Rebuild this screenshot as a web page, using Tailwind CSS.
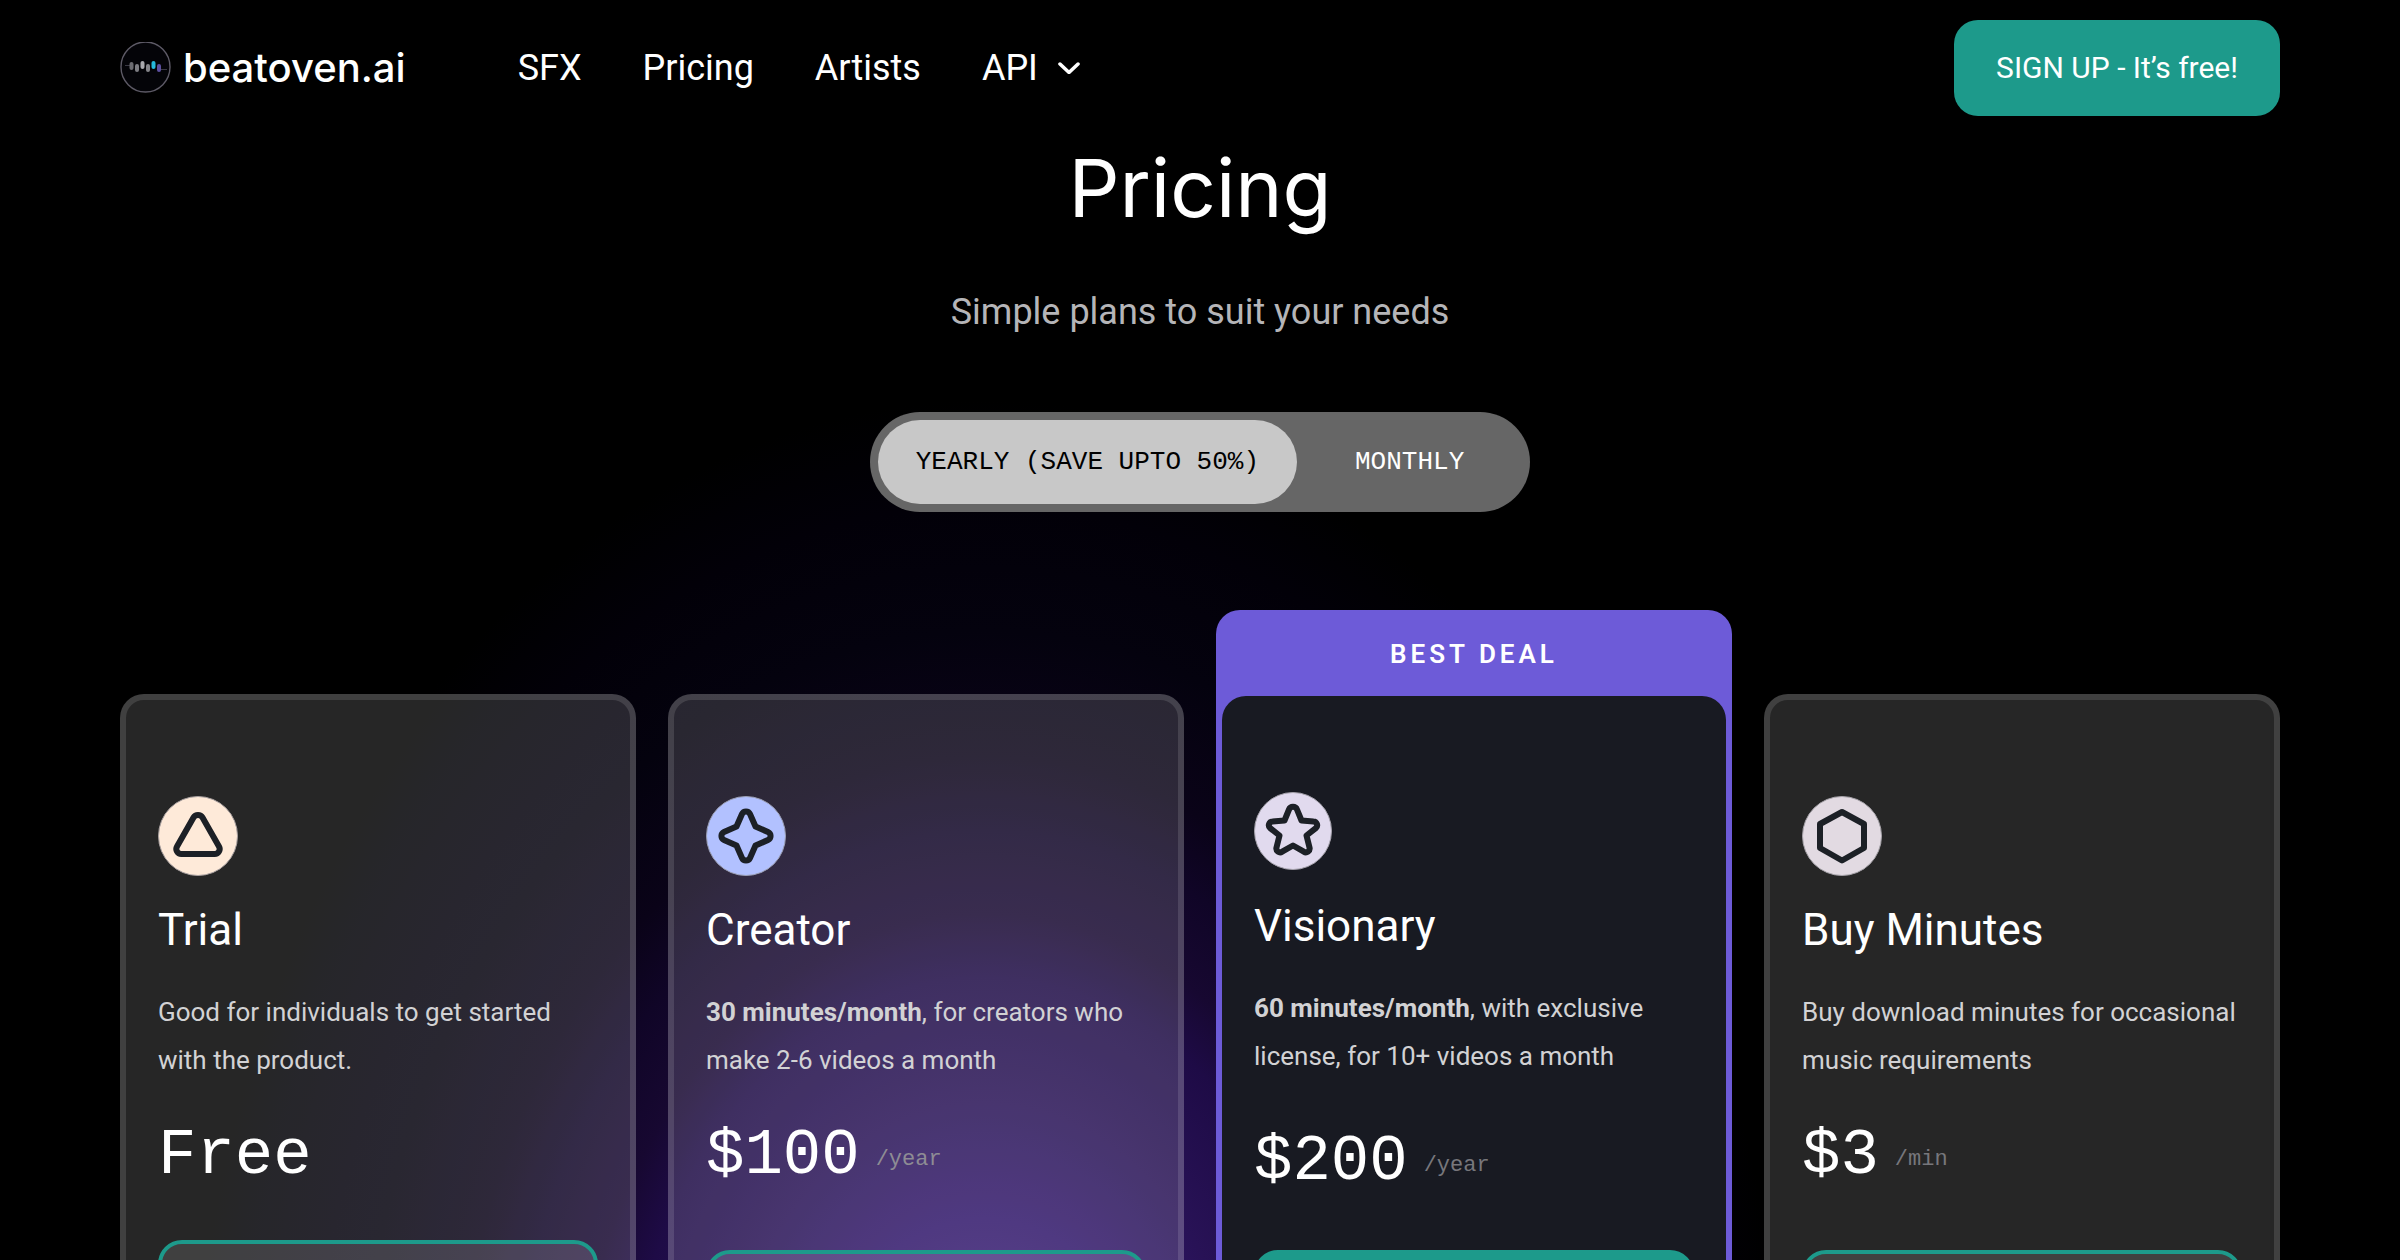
<!DOCTYPE html>
<html lang="en">
  <head>
    <meta charset="UTF-8" />
    <meta name="viewport" content="width=device-width, initial-scale=1.0" />
    <title>Pricing - beatoven.ai</title>
    <script src="https://cdn.jsdelivr.net/npm/@tailwindcss/browser@4"></script>
  </head>
  <body
    class="h-screen overflow-hidden bg-black bg-[radial-gradient(800px_1050px_at_41%_1450px,#432688_0%,#31176b_22%,#281256_33%,#1e0b46_45%,#170831_51%,#100527_59%,#0a0318_66%,#04020e_78%,#020008_90%,#000000_100%)] px-[5%] font-['Roboto',sans-serif] text-white"
  >
    <!-- Navigation Bar -->
    <header class="flex items-center justify-between py-5">
      <div class="flex items-center gap-28">
        <a href="/" class="flex items-center gap-3">
          <svg class="h-[52px] w-[51px]" viewBox="0 0 51 52" fill="none">
            <ellipse cx="25.5" cy="25" rx="24.5" ry="25" fill="#040408" stroke="#5d5a66" stroke-width="1.4" />
            <path d="M5 23.500h6M41 27.500h6" stroke="#3a3944" />
            <g stroke-width="4" stroke-linecap="round">
              <path d="M11.500 22v4" stroke="#6b6b70" />
              <path d="M17 24v4" stroke="#7d7d82" />
              <path d="M22.500 21v4" stroke="#a9a9ad" />
              <path d="M28 24v4" stroke="#85858a" />
              <path d="M33.500 21v4" stroke="#25b9dc" />
              <path d="M39 24v4" stroke="#5d50a0" />
            </g>
          </svg>
          <span class="font-['Inter',sans-serif] text-[40px] leading-[48px] font-medium">beatoven.ai</span>
        </a>
        <nav class="flex items-center gap-[61px] text-4xl">
          <a href="/sfx">SFX</a>
          <a href="/pricing">Pricing</a>
          <a href="/artists">Artists</a>
          <button type="button" class="flex items-center gap-5">
            API
            <svg class="h-3 w-[22px]" viewBox="0 0 22 12" fill="none" stroke="currentColor" stroke-width="3.5" stroke-linecap="round" stroke-linejoin="round">
              <path d="M2 2l9 8.500 9-8.500" />
            </svg>
          </button>
        </nav>
      </div>
      <a href="/signup" class="rounded-3xl bg-[#1d9a8b] px-[42px] py-7 text-3xl leading-10">SIGN UP - It’s free!</a>
    </header>

    <main>
      <!-- Heading -->
      <div class="flex flex-col items-center pt-3">
        <h1 class="font-['Inter',sans-serif] text-[80px] leading-20">Pricing</h1>
        <p class="mt-16 text-4xl text-[#b5b5b8]">Simple plans to suit your needs</p>

        <!-- Billing period -->
        <div class="mt-20 flex rounded-[50px] bg-[#666666] p-2 font-['Liberation_Mono',monospace] text-[26px] leading-9">
          <button type="button" aria-pressed="true" class="rounded-[42px] bg-[#c8c8c8] px-[38px] py-6 text-black">YEARLY (SAVE UPTO 50%)</button>
          <button type="button" aria-pressed="false" class="px-[58px] py-6">MONTHLY</button>
        </div>
      </div>

      <!-- Plans -->
      <div class="mt-[98px] grid grid-cols-4 gap-8">
        <section class="mt-21 rounded-3xl border-6 border-white/12 bg-white/15 px-8 pt-24 pb-20">
          <svg class="size-20" viewBox="0 0 80 80" fill="none">
            <circle cx="40" cy="40" r="39.500" fill="#feead9" stroke="#a8a0a0" />
            <path d="M35.500 21.500a5.200 5.200 0 0 1 9 0L61 50.500a5 5 0 0 1-4.400 7.500H23.400a5 5 0 0 1-4.400-7.500z" stroke="#1c2026" stroke-width="6" stroke-linejoin="round" />
          </svg>
          <h2 class="mt-[26px] text-[44px] leading-14">Trial</h2>
          <p class="mt-[30px] text-[26px] leading-12 text-[#d2d2d4]">Good for individuals to get started with the product.</p>
          <div class="mt-10 flex items-center gap-4 font-['Liberation_Mono',monospace]">
            <span class="text-[64px] leading-16">Free</span>
          </div>
          <button type="button" aria-label="Get started with Trial" class="mt-[52px] h-24 w-full rounded-3xl border-4 border-[#1d9a8b] bg-white/12"></button>
        </section>

        <section class="mt-21 rounded-3xl border-6 border-white/12 bg-white/15 px-8 pt-24 pb-20">
          <svg class="size-20" viewBox="0 0 80 80" fill="none">
            <circle cx="40" cy="40" r="39.500" fill="#b2c1ff" stroke="#9b9fb4" />
            <path d="M30.500 30.500L36 18a4.400 4.400 0 0 1 8 0l5.500 12.500L62 36a4.400 4.400 0 0 1 0 8l-12.500 5.500L44 62a4.400 4.400 0 0 1-8 0l-5.500-12.500L18 44a4.400 4.400 0 0 1 0-8z" stroke="#1c2026" stroke-width="6" stroke-linejoin="round" />
          </svg>
          <h2 class="mt-[26px] text-[44px] leading-14">Creator</h2>
          <p class="mt-[30px] text-[26px] leading-12 text-[#d2d2d4]"><strong>30 minutes/month</strong>, for creators who make 2-6 videos a month</p>
          <div class="mt-10 flex items-center gap-4 font-['Liberation_Mono',monospace]">
            <span class="text-[64px] leading-16">$100</span>
            <span class="pt-2 text-[22px] leading-6 text-[#8e8c94]">/year</span>
          </div>
          <button type="button" aria-label="Buy Creator" class="mt-[62px] h-24 w-full rounded-3xl border-4 border-[#1d9a8b] bg-white/12"></button>
        </section>

        <section class="rounded-t-3xl bg-[#6d5bd8] px-[6px]">
          <p class="pt-6 pb-[22px] text-center text-[26px] leading-10 font-semibold tracking-[4px]">BEST DEAL</p>
          <div class="rounded-t-3xl bg-[#181a22] px-8 pt-24 pb-20">
            <svg class="size-[78px]" viewBox="0 0 78 78" fill="none">
              <circle cx="39" cy="39" r="38.500" fill="#e1daee" stroke="#a5a2ac" />
              <path d="M30.500 28.500L35 17.500a4.300 4.300 0 0 1 8 0l4.500 11 12 1a3.800 3.800 0 0 1 2.300 6.700l-9.300 7.300 3 12a3.800 3.800 0 0 1-5.700 4.200L39 53.500l-10.800 6.200a3.800 3.800 0 0 1-5.700-4.200l3-12-9.300-7.300a3.800 3.800 0 0 1 2.300-6.700z" stroke="#1c2026" stroke-width="6" stroke-linejoin="round" />
            </svg>
            <h2 class="mt-7 text-[44px] leading-14">Visionary</h2>
            <p class="mt-[30px] text-[26px] leading-12 text-[#d2d2d4]"><strong>60 minutes/month</strong>, with exclusive license, for 10+ videos a month</p>
            <div class="mt-[50px] flex items-center gap-4 font-['Liberation_Mono',monospace]">
              <span class="text-[64px] leading-16">$200</span>
              <span class="pt-2 text-[22px] leading-6 text-[#77777c]">/year</span>
            </div>
            <button type="button" aria-label="Buy Visionary" class="mt-14 h-24 w-full rounded-3xl bg-[#1d9a8b]"></button>
          </div>
        </section>

        <section class="mt-21 rounded-3xl border-6 border-white/12 bg-white/15 px-8 pt-24 pb-20">
          <svg class="size-20" viewBox="0 0 80 80" fill="none">
            <circle cx="40" cy="40" r="39.500" fill="#e2dae2" stroke="#a5a2a8" />
            <path d="M18 28l22-12 22 12v24L40 64.500 18 52z" stroke="#1c2026" stroke-width="6" stroke-linejoin="round" />
          </svg>
          <h2 class="mt-[26px] text-[44px] leading-14">Buy Minutes</h2>
          <p class="mt-[30px] text-[26px] leading-12 text-[#d2d2d4]">Buy download minutes for occasional music requirements</p>
          <div class="mt-10 flex items-center gap-4 font-['Liberation_Mono',monospace]">
            <span class="text-[64px] leading-16">$3</span>
            <span class="pt-2 text-[22px] leading-6 text-[#77777c]">/min</span>
          </div>
          <button type="button" aria-label="Buy minutes" class="mt-[62px] h-24 w-full rounded-3xl border-4 border-[#1d9a8b] bg-white/12"></button>
        </section>
      </div>
    </main>
  </body>
</html>
